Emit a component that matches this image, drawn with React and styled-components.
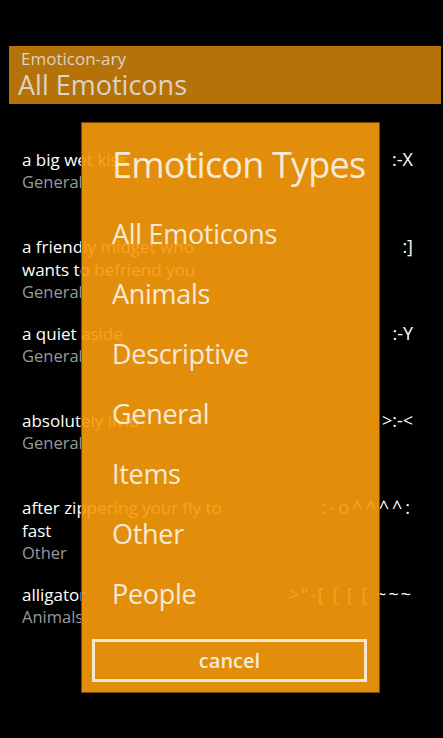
import React from 'react';
import styled, { createGlobalStyle } from 'styled-components';

const GlobalStyle = createGlobalStyle`
  html, body { margin: 0; padding: 0; background: #000; }
  body { font-family: "Open Sans", "Noto Sans", sans-serif; }
  * { box-sizing: border-box; }
`;

const Screen = styled.div`
  position: relative;
  width: 443px;
  height: 738px;
  overflow: hidden;
  background: #000;
  padding-top: 46px;
`;

const Header = styled.header`
  margin: 0 2px 0 9px;
  height: 58px;
  padding: 3px 0 0 12px;
  background: #b47208;
  color: #dcd3c6;
`;

const AppName = styled.div`
  font-size: 17px;
  line-height: 20px;
`;

const PageTitle = styled.div`
  font-size: 27px;
  line-height: 32px;
  margin-left: -3px;
`;

const List = styled.ul`
  list-style: none;
  margin: 44px 0 0;
  padding: 0 30px 0 22px;
`;

const Row = styled.li`
  display: flex;
  justify-content: space-between;
  align-items: flex-start;
  height: 87px;
`;

const Info = styled.div`
  width: 212px;
`;

const Name = styled.div`
  color: #fff;
  font-size: 17px;
  line-height: 23px;
`;

const Category = styled.div`
  color: #999;
  font-size: 16.5px;
  line-height: 21px;
`;

const Face = styled.div`
  color: #fff;
  font-size: 18px;
  line-height: 23px;
  white-space: pre;
  letter-spacing: ${(p) => p.$spacing || 0}px;
`;

const Dialog = styled.div`
  position: absolute;
  left: 81px;
  top: 122px;
  width: 299px;
  height: 571px;
  border: 1px solid #7a4a06;
  background: rgba(246, 154, 12, 0.92);
  display: flex;
  flex-direction: column;
  padding: 17px 12px 10px 10px;
  color: #f6ead6;
`;

const DialogTitle = styled.h2`
  margin: 0;
  padding-left: 20px;
  font-weight: 400;
  font-size: 36px;
  letter-spacing: -0.8px;
  line-height: 50px;
  white-space: nowrap;
`;

const Options = styled.ul`
  list-style: none;
  margin: 14px 0 0;
  padding: 0 0 0 20px;
`;

const Option = styled.li`
  font-size: 27px;
  letter-spacing: -0.3px;
  line-height: 60px;
  height: 60px;
`;

const CancelButton = styled.button`
  margin-top: 15px;
  width: 275px;
  height: 44px;
  border: 3px solid #f5e6cc;
  background: transparent;
  color: #f6ead6;
  font-family: inherit;
  font-weight: 600;
  font-size: 20px;
  padding: 0;
`;

const emoticons = [
  { name: 'a big wet kiss', cat: 'General', face: ':-X' },
  { name: 'a friendly midget who wants to befriend you', cat: 'General', face: ':]' },
  { name: 'a quiet aside', cat: 'General', face: ':-Y' },
  { name: 'absolutely livid', cat: 'General', face: '>:-<' },
  { name: 'after zippering your fly to fast', cat: 'Other', face: ':-o^^^^:', spacing: 3 },
  { name: 'alligator', cat: 'Animals', face: '>"-[ [ [ [ ~~~', spacing: 2 },
];

const types = ['All Emoticons', 'Animals', 'Descriptive', 'General', 'Items', 'Other', 'People'];

export default function App() {
  return (
    <Screen>
      <GlobalStyle />
      <Header>
        <AppName>Emoticon-ary</AppName>
        <PageTitle>All Emoticons</PageTitle>
      </Header>
      <List>
        {emoticons.map((e) => (
          <Row key={e.name}>
            <Info>
              <Name>{e.name}</Name>
              <Category>{e.cat}</Category>
            </Info>
            <Face $spacing={e.spacing}>{e.face}</Face>
          </Row>
        ))}
      </List>
      <Dialog>
        <DialogTitle>Emoticon Types</DialogTitle>
        <Options>
          {types.map((t) => (
            <Option key={t}>{t}</Option>
          ))}
        </Options>
        <CancelButton>cancel</CancelButton>
      </Dialog>
    </Screen>
  );
}
